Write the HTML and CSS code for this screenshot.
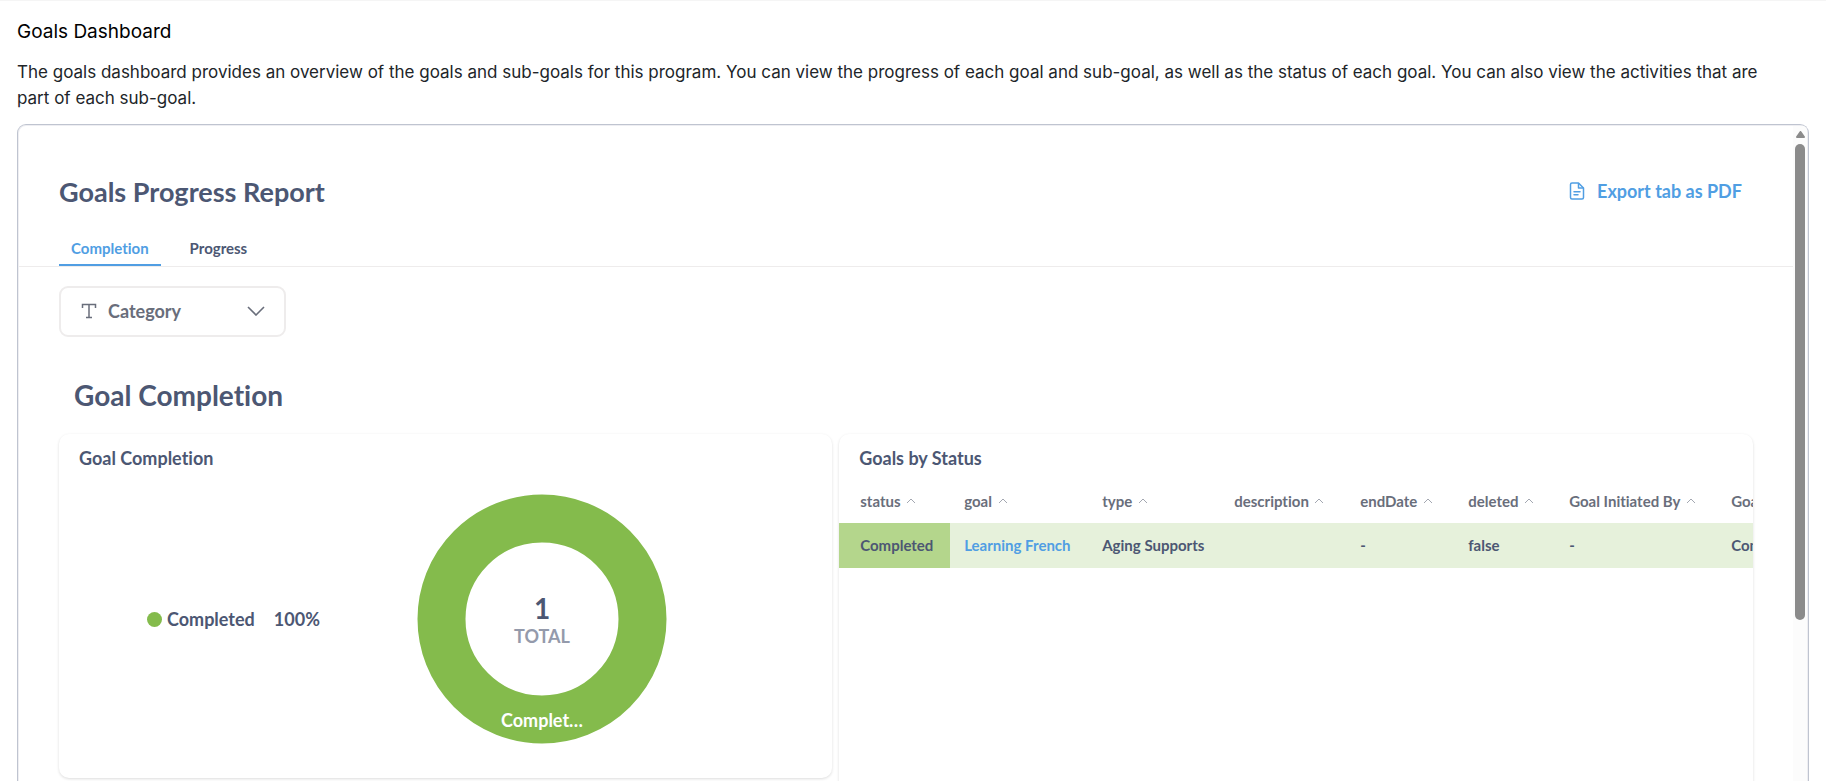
FILE: index.html
```html
<!DOCTYPE html>
<html lang="en">
<head>
  <meta charset="UTF-8">
  <meta name="viewport" content="width=device-width, initial-scale=1.0">
  <title>Goals Dashboard</title>
  <link rel="stylesheet" href="styles.css">
</head>
<body>
  <h1 class="page-title">Goals Dashboard</h1>
  <p class="page-intro">The goals dashboard provides an overview of the goals and sub-goals for this program. You can view the progress of each goal and sub-goal, as well as the status of each goal. You can also view the activities that are part of each sub-goal.</p>

  <div class="frame">
    <main class="report">
      <header class="report-header">
        <h2>Goals Progress Report</h2>
        <button type="button" class="export">
          <svg width="16" height="18" viewBox="0 0 16 18" fill="none" stroke="currentColor" stroke-width="1.5" stroke-linejoin="round">
            <path d="M3 1H9.5L14.5 6V15.5Q14.5 17 13 17H3Q1.5 17 1.5 15.5V2.5Q1.5 1 3 1Z"/>
            <path d="M9.5 1V6H14.5"/>
            <path d="M5 9.8H11M5 12.8H9" stroke-linecap="round"/>
          </svg>
          Export tab as PDF
        </button>
      </header>

      <nav class="tabs">
        <a href="#completion" class="tab active">Completion</a>
        <a href="#progress" class="tab">Progress</a>
      </nav>

      <button type="button" class="filter">
        <svg width="16" height="16" viewBox="0 0 16 16" fill="none" stroke="currentColor" stroke-width="1.5">
          <path d="M1.5 5V1.5H14.5V5M8 1.5V14.5M5 14.5H11"/>
        </svg>
        <span>Category</span>
        <svg class="filter-arrow" width="18" height="10" viewBox="0 0 18 10" fill="none" stroke="currentColor" stroke-width="1.6">
          <path d="M1 1L9 9L17 1"/>
        </svg>
      </button>

      <h2 class="section-title" id="completion">Goal Completion</h2>

      <div class="cards">
        <section class="card chart-card">
          <h3>Goal Completion</h3>
          <div class="chart">
            <div class="legend">
              <span class="dot"></span>
              <span>Completed</span>
              <span class="percent">100%</span>
            </div>
            <svg class="donut" width="250" height="250" viewBox="0 0 250 250">
              <circle cx="125" cy="125" r="100.5" fill="none" stroke="#84bb4c" stroke-width="48"/>
              <text x="125" y="125" class="donut-value">1</text>
              <text x="125" y="149" class="donut-label">TOTAL</text>
              <text x="125" y="233" class="donut-slice">Complet…</text>
            </svg>
          </div>
        </section>

        <section class="card table-card">
          <h3>Goals by Status</h3>
          <table>
            <colgroup>
              <col class="w-status"><col class="w-goal"><col class="w-type"><col class="w-description">
              <col class="w-date"><col class="w-deleted"><col class="w-initiated"><col class="w-category">
            </colgroup>
            <thead>
              <tr>
                <th>status <svg class="sort" viewBox="0 0 10 6"><path d="M1 5L5 1L9 5"/></svg></th>
                <th>goal <svg class="sort" viewBox="0 0 10 6"><path d="M1 5L5 1L9 5"/></svg></th>
                <th>type <svg class="sort" viewBox="0 0 10 6"><path d="M1 5L5 1L9 5"/></svg></th>
                <th>description <svg class="sort" viewBox="0 0 10 6"><path d="M1 5L5 1L9 5"/></svg></th>
                <th>endDate <svg class="sort" viewBox="0 0 10 6"><path d="M1 5L5 1L9 5"/></svg></th>
                <th>deleted <svg class="sort" viewBox="0 0 10 6"><path d="M1 5L5 1L9 5"/></svg></th>
                <th>Goal Initiated By <svg class="sort" viewBox="0 0 10 6"><path d="M1 5L5 1L9 5"/></svg></th>
                <th>Goal</th>
              </tr>
            </thead>
            <tbody>
              <tr>
                <td class="status">Completed</td>
                <td><a href="#goal">Learning French</a></td>
                <td>Aging Supports</td>
                <td></td>
                <td>-</td>
                <td>false</td>
                <td>-</td>
                <td>Com</td>
              </tr>
            </tbody>
          </table>
        </section>
      </div>
    </main>

    <div class="scrollbar">
      <svg width="9" height="7" viewBox="0 0 9 7"><path d="M4.5 1L8 6H1Z" fill="#8b8b8b" stroke="#8b8b8b" stroke-width="2" stroke-linejoin="round"/></svg>
      <div class="thumb"></div>
    </div>
  </div>
</body>
</html>
```
FILE: styles.css
```css
* { box-sizing: border-box; }
body {
  display: flex;
  flex-direction: column;
  height: 100vh;
  margin: 0;
  padding: 17px 17px 0;
  overflow: hidden;
  border-top: 1px solid #f5f5f5;
  font-family: Inter, sans-serif;
  color: #212529;
}
h1, h2, h3, p { margin: 0; }
button { padding: 0; border: none; background: none; font: inherit; cursor: pointer; }
a { color: #509ee3; text-decoration: none; }

.page-title { font-size: 19px; line-height: 28px; font-weight: 400; color: #000; }
.page-intro { margin: 13px 0; padding-right: 32px; font-size: 17px; line-height: 26px; }

.frame {
  display: flex;
  flex: 1;
  min-height: 0;
  margin-bottom: -2px;
  border: 1px solid #bfc4d0;
  border-bottom: none;
  border-radius: 9px 9px 0 0;
  box-shadow: inset 0 0 0 1px #eeeef2;
  overflow: hidden;
}
.report {
  flex: 1;
  min-width: 0;
  padding-left: 1px;
  font-family: Lato, sans-serif;
  font-weight: 700;
  font-variant-ligatures: none;
  color: #4c5773;
}

.report-header { display: flex; justify-content: space-between; align-items: center; padding: 49px 51px 0 40px; }
.report-header h2 { font-size: 27px; line-height: 36px; }
.export { display: flex; align-items: center; gap: 12px; padding-bottom: 2px; color: #509ee3; font-size: 18px; line-height: 24px; }

.tabs { display: flex; gap: 17px; margin-top: 22px; padding-left: 40px; border-bottom: 1px solid #eeecec; }
.tab { padding: 6px 12px; border-bottom: 2px solid transparent; font-size: 15px; line-height: 20px; color: #4c5773; }
.tab.active { color: #509ee3; border-color: #509ee3; }

.filter {
  display: flex;
  align-items: center;
  gap: 11px;
  width: 227px;
  height: 51px;
  margin: 19px 0 0 40px;
  padding: 0 19px 2px 20px;
  border: 2px solid #eeecec;
  border-radius: 9px;
  font-size: 18px;
  color: #696e7b;
}
.filter-arrow { margin-left: auto; }

.section-title { margin: 39px 0 20px 55px; font-size: 28px; line-height: 38px; }

.cards { display: grid; grid-template-columns: 11fr 13fr; align-items: start; gap: 7px; padding: 0 40px; }
.card { min-width: 0; border-radius: 10px; box-shadow: 0 1px 3px rgba(0, 0, 0, 0.14); overflow: hidden; }
.card h3 { padding: 12px 20px 0; font-size: 18px; line-height: 24px; }
.chart-card { height: 344px; }
.table-card { height: 460px; }

.chart { display: flex; align-items: center; padding: 24px 20px 0 88px; }
.legend { display: flex; align-items: center; width: 270px; font-size: 18px; line-height: 24px; }
.dot { width: 15px; height: 15px; margin-right: 5px; border-radius: 50%; background: #84bb4c; }
.percent { margin-left: 19px; }
.donut text { text-anchor: middle; font-size: 18px; }
.donut .donut-value { font-size: 28px; fill: #4c5773; }
.donut .donut-label { fill: #949aab; }
.donut .donut-slice { fill: #fff; }

table { width: 1010px; margin-top: 8px; table-layout: fixed; border-collapse: collapse; font-size: 15px; line-height: 20px; }
th, td { height: 45px; padding: 0 0 0 14px; text-align: left; white-space: nowrap; }
th:first-child, td:first-child { padding-left: 21px; }
th { color: #696e7b; }
td { padding-bottom: 2px; background: #e6f1db; }
.status { background: #b4d68c; }
.sort { width: 10px; height: 6px; margin-left: 2px; vertical-align: 3px; fill: none; stroke: #a3a7b1; }
.w-status { width: 111px; }
.w-goal { width: 138px; }
.w-type { width: 132px; }
.w-description { width: 126px; }
.w-date { width: 108px; }
.w-deleted { width: 101px; }
.w-initiated { width: 162px; }

.scrollbar { display: flex; flex-direction: column; align-items: center; gap: 6px; width: 14px; margin: 1px 1px 0 0; padding-top: 5px; background: #fcfcfc; }
.thumb { width: 10px; height: 73%; border-radius: 5px; background: #8b8b8b; }
```
